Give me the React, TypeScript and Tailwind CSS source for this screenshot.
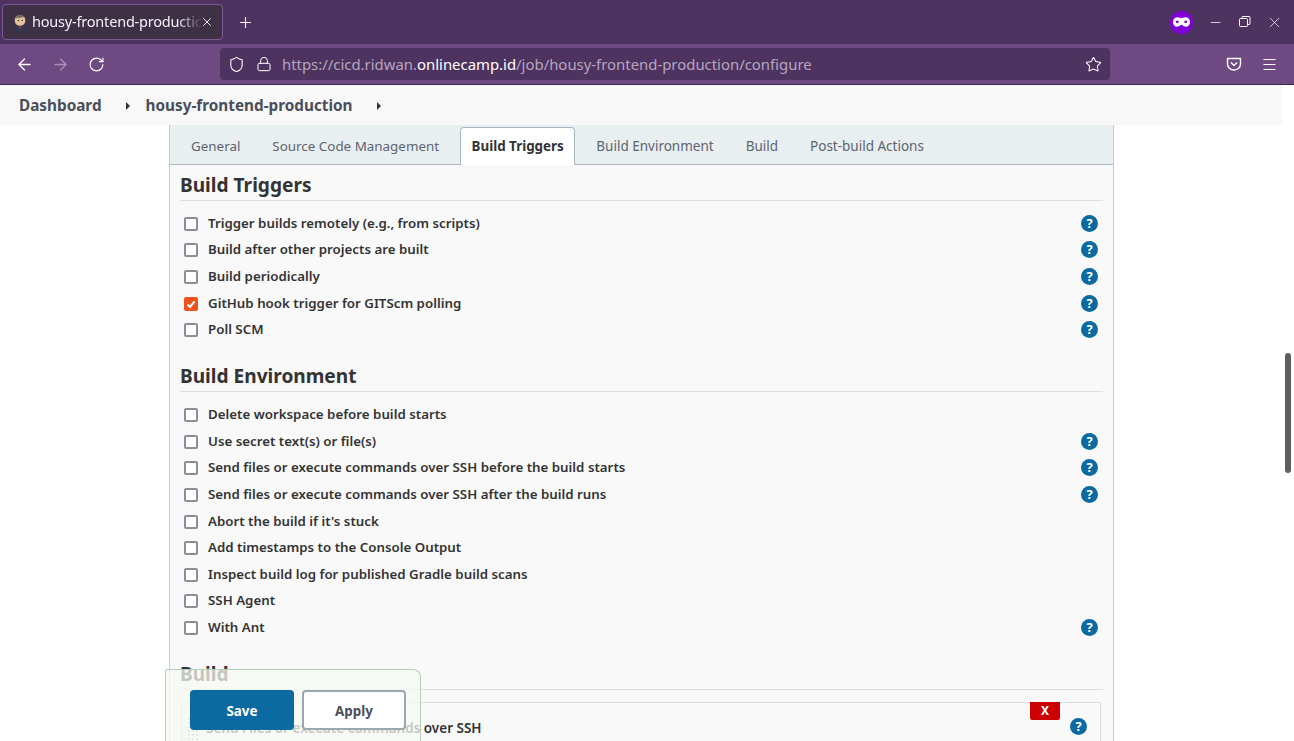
import { ArrowLeft, ArrowRight, Lock, Menu, Minus, Plus, RotateCw, Shield, Star, X } from "lucide-react";

const FONT = "font-['Noto_Sans','Open_Sans',sans-serif]";

const tabs = ["General", "Source Code Management", "Build Triggers", "Build Environment", "Build", "Post-build Actions"];

const triggerRows = [
  { label: "Trigger builds remotely (e.g., from scripts)", help: true },
  { label: "Build after other projects are built", help: true },
  { label: "Build periodically", help: true },
  { label: "GitHub hook trigger for GITScm polling", help: true, checked: true },
  { label: "Poll SCM", help: true },
];

const envRows = [
  { label: "Delete workspace before build starts" },
  { label: "Use secret text(s) or file(s)", help: true },
  { label: "Send files or execute commands over SSH before the build starts", help: true },
  { label: "Send files or execute commands over SSH after the build runs", help: true },
  { label: "Abort the build if it's stuck" },
  { label: "Add timestamps to the Console Output" },
  { label: "Inspect build log for published Gradle build scans" },
  { label: "SSH Agent" },
  { label: "With Ant", help: true },
];

function HelpIcon() {
  return (
    <span className="mb-[1px] flex h-[17px] w-[17px] shrink-0 items-center justify-center rounded-full bg-[#0b6aa2] text-[13px] font-bold leading-none text-white">
      ?
    </span>
  );
}

function CheckRow({ label, help, checked }: { label: string; help?: boolean; checked?: boolean }) {
  return (
    <div className="flex h-[26.6px] items-center pl-[14px] pr-[15px]">
      {checked ? (
        <span className="flex h-[14px] w-[14px] shrink-0 items-center justify-center rounded-[2px] bg-[#f0521f]">
          <svg viewBox="0 0 14 14" className="h-[14px] w-[14px]" fill="none" stroke="white" strokeWidth="2">
            <path d="M3.500 7.500 6 10l4.500-5.500" />
          </svg>
        </span>
      ) : (
        <span className="h-[14px] w-[14px] shrink-0 rounded-[2px] border-2 border-[#8e8e9b] bg-white" />
      )}
      <span className="ml-[10px] flex-1 text-[13.3px] font-semibold text-[#333]">{label}</span>
      {help && <HelpIcon />}
    </div>
  );
}

function SectionTitle({ children }: { children: string }) {
  return (
    <div className="mx-[10px] h-[27px] border-b border-[#dedede] text-[19.1px] font-bold leading-[22px] text-[#333]">
      {children}
    </div>
  );
}

function BrowserChrome() {
  return (
    <>
      <div className="flex h-[44px] items-center bg-[#4e3260] pl-[2px] text-white">
        <div className="relative flex h-[36px] w-[221px] items-center rounded-[4px] border border-[#7f5a99] bg-[#3f3145] pl-[8px]">
          <svg viewBox="0 0 16 16" className="h-[17px] w-[17px] shrink-0">
            <circle cx="8.500" cy="6" r="5" fill="#e3c19c" />
            <path d="M4 4.500c1-4 7-5 9-1-2-1-3 0-5 0s-3 0-4 1Z" fill="#75675a" />
            <circle cx="7" cy="6" r="0.700" fill="#333" />
            <circle cx="10.500" cy="6" r="0.700" fill="#333" />
            <path d="M2 16c1-3 3-4.500 6.500-4.500S14 13 15 16Z" fill="#2c3a55" />
            <path d="M7 12h3l-1.500 2Z" fill="#c9302c" />
          </svg>
          <span className="ml-[4px] w-[170px] overflow-hidden whitespace-nowrap text-[14.5px] tracking-[-0.2px] text-[#f4f0f6] [mask-image:linear-gradient(to_right,black_86%,transparent)]">
            housy-frontend-production
          </span>
          <X size={14} strokeWidth={1.5} className="absolute right-[8px] top-[10px]" />
        </div>
        <Plus size={17} strokeWidth={1.6} className="ml-[14px]" />
        <div className="ml-auto flex items-center">
          <span className="flex h-[23px] w-[23px] items-center justify-center rounded-full bg-[#8000d7]">
            <svg viewBox="0 0 18 10" className="h-[10px] w-[17px]">
              <path
                fillRule="evenodd"
                fill="white"
                d="M5 0c2 0 3 1 4 1s2-1 4-1c3 0 5 2 5 5s-2 5-4.500 5C11 10 10 8 9 8s-2 2-4.500 2C2 10 0 8 0 5s2-5 5-5Zm-.500 3.500a1.600 1.300 0 1 0 0.010 0Zm9 0a1.600 1.300 0 1 0 0.010 0Z"
              />
            </svg>
          </span>
          <Minus size={15} strokeWidth={1.2} className="ml-[15px]" />
          <svg viewBox="0 0 12 12" className="ml-[16px] h-[12px] w-[12px]" fill="none" stroke="white" strokeWidth="1">
            <rect x="0.500" y="2.500" width="8" height="8" rx="1" />
            <path d="M3 2.500V1.500a1 1 0 0 1 1-1h6a1 1 0 0 1 1 1v6a1 1 0 0 1-1 1H8.500" />
          </svg>
          <X size={17} strokeWidth={1} className="ml-[15px] mr-[11px]" />
        </div>
      </div>
      <div className="flex h-[41px] items-center border-b border-[#3f2850] bg-[#6f4a82] text-white">
        <ArrowLeft size={19} strokeWidth={1.6} className="ml-[15px]" />
        <ArrowRight size={19} strokeWidth={1.6} className="ml-[17px] opacity-40" />
        <RotateCw size={17} strokeWidth={1.6} className="ml-[18px]" />
        <div className="ml-[115px] flex h-[32px] w-[890px] items-center rounded-[4px] bg-[#4e3260] pl-[8px] pr-[8px]">
          <Shield size={17} strokeWidth={1.5} />
          <Lock size={16} strokeWidth={1.5} className="ml-[11px]" />
          <span className="ml-[10px] flex-1 whitespace-nowrap text-[14.9px] text-[#b5a6bf]">
            https://cicd.ridwan.<span className="text-white">onlinecamp.id</span>/job/housy-frontend-production/configure
          </span>
          <Star size={17} strokeWidth={1.5} />
        </div>
        <svg viewBox="0 0 16 16" className="ml-[116px] h-[16px] w-[16px]" fill="none" stroke="white" strokeWidth="1.400">
          <path d="M1.500 2.500h13v5.500a6.500 6 0 0 1-13 0Z" strokeLinejoin="round" />
          <path d="m5 6.500 3 3 3-3" />
        </svg>
        <Menu size={17} strokeWidth={1.4} className="ml-[19px]" />
      </div>
    </>
  );
}

export default function App() {
  return (
    <div className={`relative h-[741px] w-[1294px] overflow-hidden bg-white ${FONT}`}>
      <BrowserChrome />

      <div className="flex h-[40px] w-[1282px] items-center bg-[#f8f8f8] pl-[19px] pt-[1px] text-[15.300px] font-bold text-[#4a4e5a]">
        <span>Dashboard</span>
        <span className="ml-[24px] h-0 w-0 border-y-[4px] border-l-[4px] border-y-transparent border-l-[#333]" />
        <span className="ml-[16px]">housy-frontend-production</span>
        <span className="ml-[24px] h-0 w-0 border-y-[4px] border-l-[4px] border-y-transparent border-l-[#333]" />
      </div>

      <div className="ml-[169px] w-[945px] border-x border-[#c9c9c9] bg-[#f9f9f9]">
        <div className="flex h-[40px] items-end border-b border-[#a9b8c0] bg-[#e9eef1] pl-[10px]">
          {tabs.map((tab, i) =>
            tab === "Build Triggers" ? (
              <div
                key={tab}
                className="mb-[-1px] mr-[10px] flex h-[38px] items-center rounded-t-[4px] border border-b-0 border-[#a9b8c0] bg-white px-[10.500px] text-[13.400px] font-bold text-[#333]"
              >
                {tab}
              </div>
            ) : (
              <div
                key={tab}
                className={
                  i < 2
                    ? "mr-[10px] flex h-[38px] items-center px-[11px] pt-[2px] text-[13.400px] text-[#5b6570]"
                    : "mr-[10px] flex h-[38px] items-center px-[11px] pt-[2px] text-[13.500px] text-[#5b6570]"
                }
              >
                {tab}
              </div>
            ),
          )}
        </div>

        <div className="pt-[9px]">
          <SectionTitle>Build Triggers</SectionTitle>
          <div className="pt-[9.500px]">
            {triggerRows.map((row) => (
              <CheckRow key={row.label} {...row} />
            ))}
          </div>

          <div className="pt-[22px]">
            <SectionTitle>Build Environment</SectionTitle>
          </div>
          <div className="pt-[9.500px]">
            {envRows.map((row) => (
              <CheckRow key={row.label} {...row} />
            ))}
          </div>

          <div className="pt-[22px]">
            <SectionTitle>Build</SectionTitle>
          </div>
          <div className="relative ml-[11px] mr-[12px] mt-[12px] h-[60px] border border-[#dedede] pl-[24px] pt-[12px]">
            <span className="absolute left-[5px] top-[14px] h-[26px] w-[13px] bg-[radial-gradient(#bdbdbd_1px,transparent_1px)] bg-[length:4px_4px]" />
            <span className="text-[13.500px] font-semibold text-[#333]">Send Files or execute commands over SSH</span>
            <span className="absolute right-[40px] top-[-1px] flex h-[18px] w-[30px] items-center justify-center rounded-b-[2px] bg-[#cc0003] text-[12px] font-bold text-white">
              X
            </span>
            <span className="absolute right-[13px] top-[15px]">
              <HelpIcon />
            </span>
          </div>
        </div>
      </div>

      {/* sticky save bar */}
      <div className="absolute bottom-0 left-[165px] flex h-[72px] w-[256px] gap-[8px] rounded-tr-[8px] rounded-tl-[2px] border border-b-0 border-[#b2d0b8] bg-[#f5f8f1]/75 pl-[24px] pt-[20px]">
        <button className="h-[40px] w-[104px] rounded-[4px] bg-[#0b6aa2] pt-[2px] text-[13.400px] font-bold text-white">Save</button>
        <button className="h-[40px] w-[104px] rounded-[4px] border-2 border-[#9aa7ae] bg-white pt-[2px] text-[13.400px] font-bold text-[#4a4e5a]">
          Apply
        </button>
      </div>

      {/* page scrollbar */}
      <div className="absolute left-[1285px] top-[353px] h-[120px] w-[6px] rounded-full bg-[#5f5f5f]" />
    </div>
  );
}
